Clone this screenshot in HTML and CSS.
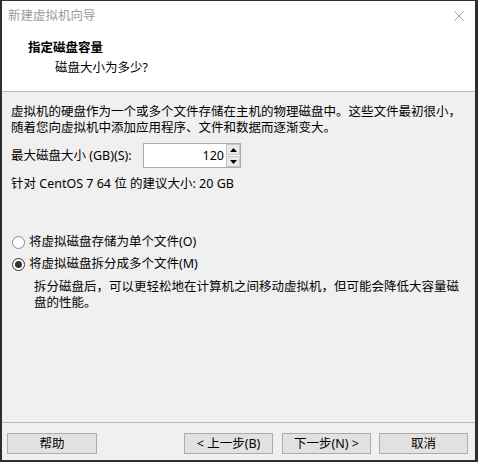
FILE: index.html
```html
<!DOCTYPE html>
<html lang="zh-CN">
<head>
<meta charset="utf-8">
<title>新建虚拟机向导</title>
<link rel="stylesheet" href="styles.css">
</head>
<body>
<div class="window">
  <div class="titlebar">
    <span class="title">新建虚拟机向导</span>
    <svg class="close" width="10" height="10" viewBox="0 0 10 10"><path d="M0.5 0.5 L9.5 9.5 M9.5 0.5 L0.5 9.5" stroke="#9a9a9a" stroke-width="1" fill="none"/></svg>
  </div>
  <div class="header">
    <div class="h-title">指定磁盘容量</div>
    <div class="h-sub">磁盘大小为多少?</div>
  </div>
  <div class="content">
    <p class="intro">虚拟机的硬盘作为一个或多个文件存储在主机的物理磁盘中。这些文件最初很小，随着您向虚拟机中添加应用程序、文件和数据而逐渐变大。</p>
    <div class="size-row">
      <span class="label">最大磁盘大小 (GB)(S):</span>
      <div class="spin">
        <span class="spin-value">120</span>
        <div class="spin-btns">
          <div class="spin-btn"><svg width="7" height="4" viewBox="0 0 7 4"><path d="M0 4 L3.5 0 L7 4 Z" fill="#000"/></svg></div>
          <div class="spin-btn"><svg width="7" height="4" viewBox="0 0 7 4"><path d="M0 0 L3.5 4 L7 0 Z" fill="#000"/></svg></div>
        </div>
      </div>
    </div>
    <p class="recommend">针对 CentOS 7 64 位 的建议大小: 20 GB</p>
    <div class="options">
      <div class="radio-row">
        <span class="radio"></span>
        <span class="radio-label">将虚拟磁盘存储为单个文件(O)</span>
      </div>
      <div class="radio-row">
        <span class="radio checked"><span class="dot"></span></span>
        <span class="radio-label">将虚拟磁盘拆分成多个文件(M)</span>
      </div>
      <p class="desc">拆分磁盘后，可以更轻松地在计算机之间移动虚拟机，但可能会降低大容量磁盘的性能。</p>
    </div>
  </div>
  <div class="footer">
    <button class="btn">帮助</button>
    <div class="spacer"></div>
    <button class="btn prev">&lt; 上一步(B)</button>
    <button class="btn next">下一步(N) &gt;</button>
    <button class="btn cancel">取消</button>
  </div>
</div>
</body>
</html>
```
FILE: styles.css
```css
html, body {
  margin: 0;
  padding: 0;
  background: #2e2e2e;
  width: 478px;
  height: 462px;
  overflow: hidden;
}
body {
  font-family: "Noto Sans", "Noto Sans CJK SC", sans-serif;
  font-size: 12.5px;
  color: #000;
}
.window {
  margin: 1px 0 0 2px;
  width: 473px;
  height: 459px;
  background: #f0f0f0;
  display: flex;
  flex-direction: column;
}
.titlebar {
  height: 30px;
  background: #fff;
  display: flex;
  align-items: center;
  padding: 0 11px 0 6px;
}
.title {
  color: #9a9a9a;
  line-height: 16px;
  flex: 1;
}
.close {
  display: block;
}
.header {
  height: 60px;
  background: #fff;
  border-bottom: 1px solid #b9b9b9;
  padding: 7px 0 0 26px;
  box-sizing: border-box;
  height: 61px;
}
.h-title {
  font-weight: bold;
  line-height: 20px;
}
.h-sub {
  line-height: 20px;
  padding-left: 27px;
}
.content {
  flex: 1;
  padding: 12px 10px 0 9px;
}
p {
  margin: 0;
}
.intro {
  line-height: 16px;
}
.size-row {
  margin-top: 7px;
  display: flex;
  align-items: center;
  height: 25px;
}
.label {
  line-height: 16px;
  width: 132px;
}
.spin {
  width: 98px;
  height: 25px;
  box-sizing: border-box;
  border: 1px solid #abadb3;
  background: #fff;
  display: flex;
  align-items: center;
}
.spin-value {
  flex: 1;
  text-align: right;
  padding-right: 2px;
  line-height: 16px;
}
.spin-btns {
  width: 14px;
  height: 23px;
  display: flex;
  flex-direction: column;
  gap: 1px;
  margin-right: 0;
}
.spin-btn {
  flex: 1;
  background: #e9e9e9;
  border: 1px solid #c6c6c6;
  display: flex;
  align-items: center;
  justify-content: center;
}
.spin-btn svg {
  display: block;
}
.recommend {
  margin-top: 8px;
  line-height: 16px;
}
.options {
  margin-top: 39px;
}
.radio-row {
  height: 22px;
  display: flex;
  align-items: center;
}
.radio {
  width: 13px;
  height: 13px;
  box-sizing: border-box;
  border: 1px solid #8a8a8a;
  border-radius: 50%;
  background: #fff;
  margin-left: 1px;
  display: flex;
  align-items: center;
  justify-content: center;
}
.radio.checked {
  border-color: #333;
}
.dot {
  width: 7px;
  height: 7px;
  border-radius: 50%;
  background: #333;
}
.radio-label {
  margin-left: 4px;
  line-height: 16px;
}
.desc {
  margin-top: 4px;
  padding-left: 23px;
  line-height: 16px;
}
.footer {
  border-top: 1px solid #b9b9b9;
  height: 38px;
  box-sizing: border-box;
  padding: 10px 7px 0 5px;
  display: flex;
  align-items: flex-start;
}
.spacer {
  flex: 1;
}
.btn {
  width: 90px;
  height: 21px;
  box-sizing: border-box;
  border: 1px solid #adadad;
  background: #e1e1e1;
  font-family: inherit;
  font-size: 12.5px;
  color: #000;
  padding: 0;
  line-height: 16px;
}
.prev, .next, .cancel {
  width: 89px;
}
.next {
  margin-left: 9px;
}
.cancel {
  margin-left: 8px;
}
```
